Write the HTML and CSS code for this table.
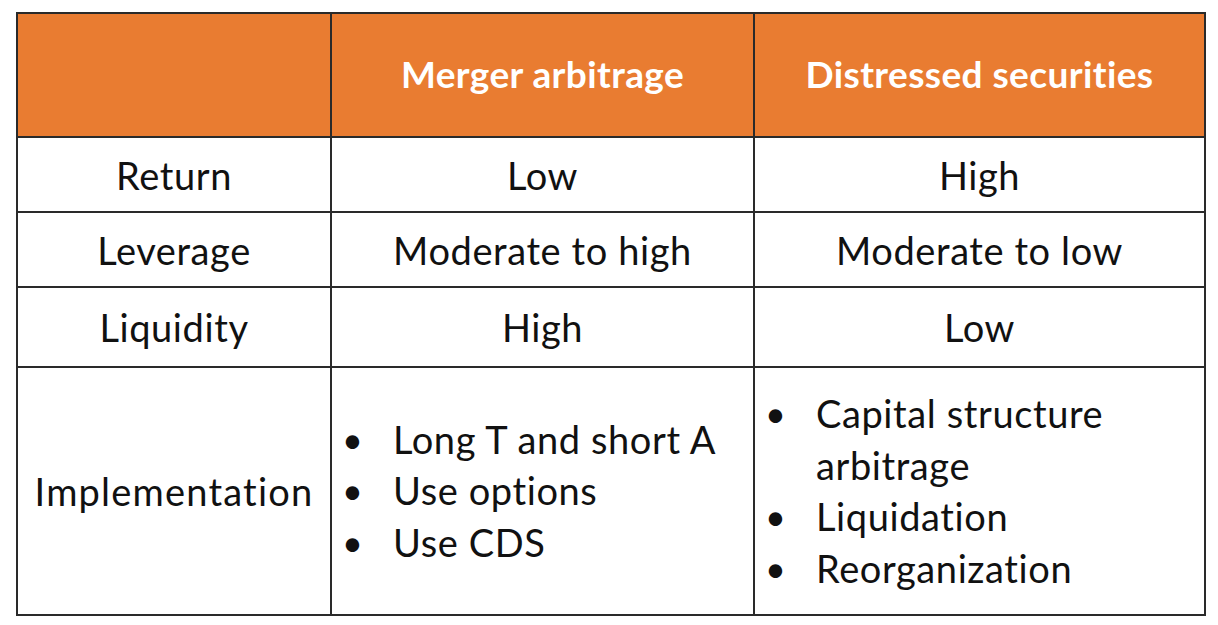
FILE: index.html
```html
<!DOCTYPE html>
<html>
<head>
<meta charset="utf-8">
<link rel="stylesheet" href="styles.css">
</head>
<body>
<table class="cmp">
  <colgroup>
    <col class="c1">
    <col class="c2">
    <col class="c3">
  </colgroup>
  <thead>
    <tr class="head">
      <th></th>
      <th>Merger arbitrage</th>
      <th>Distressed securities</th>
    </tr>
  </thead>
  <tbody>
    <tr class="r1"><td>Return</td><td>Low</td><td>High</td></tr>
    <tr class="r2"><td>Leverage</td><td>Moderate to high</td><td>Moderate to low</td></tr>
    <tr class="r3"><td>Liquidity</td><td>High</td><td>Low</td></tr>
    <tr class="r4">
      <td class="impl">Implementation</td>
      <td class="listcell">
        <ul class="bul">
          <li><span class="dot">•</span><span class="txt">Long T and short A</span></li>
          <li><span class="dot">•</span><span class="txt">Use options</span></li>
          <li><span class="dot">•</span><span class="txt">Use CDS</span></li>
        </ul>
      </td>
      <td class="listcell">
        <ul class="bul">
          <li><span class="dot">•</span><span class="txt">Capital structure arbitrage</span></li>
          <li><span class="dot">•</span><span class="txt">Liquidation</span></li>
          <li><span class="dot">•</span><span class="txt">Reorganization</span></li>
        </ul>
      </td>
    </tr>
  </tbody>
</table>
</body>
</html>
```
FILE: styles.css
```css
html, body {
  margin: 0;
  padding: 0;
  background: #ffffff;
}
body {
  padding: 12px 0 0 16px;
  font-family: Lato, "Open Sans", sans-serif;
  color: #111111;
}
.cmp {
  border-collapse: collapse;
  table-layout: fixed;
  width: 1188px;
}
.c1 { width: 314px; }
.c2 { width: 423px; }
.c3 { width: 451px; }
.cmp th, .cmp td {
  border: 2px solid #2a2a2a;
  text-align: center;
  vertical-align: middle;
  padding: 0;
  font-size: 38px;
  letter-spacing: 0.6px;
  font-weight: 400;
  line-height: 44px;
}
.cmp td.impl {
  letter-spacing: 1.2px;
}
.cmp .head th {
  background: #e97c31;
  color: #ffffff;
  font-weight: 700;
  font-size: 37px;
  letter-spacing: 0.4px;
  height: 119px;
  padding-bottom: 3px;
}
.r1 td, .r2 td { height: 73px; }
.r3 td { height: 78px; }
.r4 td { height: 246px; }
.cmp td.listcell {
  text-align: left;
}
.bul {
  list-style: none;
  margin: 0;
  padding: 0 16px 0 0;
}
.bul li {
  display: flex;
  line-height: 51.5px;
}
.dot {
  box-sizing: border-box;
  width: 61px;
  flex: none;
  font-size: 36px;
  padding-left: 10px;
  text-align: left;
}
.txt {
  flex: 1;
}
```
